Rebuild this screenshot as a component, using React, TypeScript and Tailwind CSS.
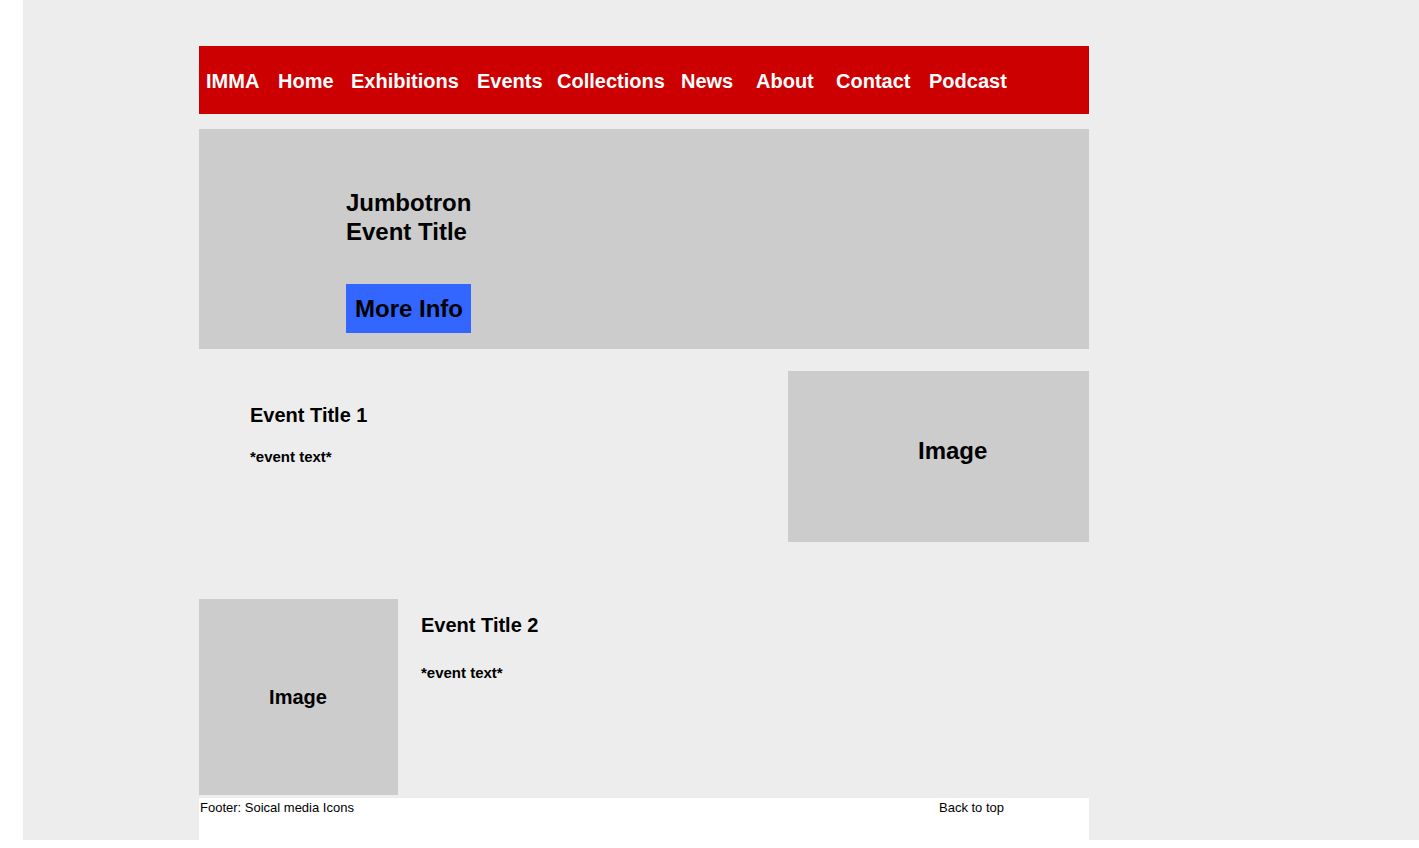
const NavItems = [
  { label: "IMMA", w: "w-[72px]" },
  { label: "Home", w: "w-[73px]" },
  { label: "Exhibitions", w: "w-[126px]" },
  { label: "Events", w: "w-[80px]" },
  { label: "Collections", w: "w-[124px]" },
  { label: "News", w: "w-[75px]" },
  { label: "About", w: "w-[80px]" },
  { label: "Contact", w: "w-[93px]" },
  { label: "Podcast", w: "w-auto" },
];

const App = () => {
  return (
    <div className="bg-white min-h-[848px] font-['Liberation_Sans',Arial,sans-serif]">
      <div className="ml-[23px] h-[840px] bg-[#ededed] pt-[46px] pl-[176px]">
        <div className="w-[890px]">
          {/* nav */}
          <nav className="h-[68px] bg-[#cc0000] flex items-center pl-[7px] pt-[2px]">
            {NavItems.map((item, index) => (
              <span
                key={index}
                className={`${item.w} shrink-0 text-white font-bold text-[20px] leading-[23px]`}
              >
                {item.label}
              </span>
            ))}
          </nav>

          {/* jumbotron */}
          <div className="mt-[15px] h-[220px] bg-[#cccccc] pt-[59px] pl-[147px]">
            <h1 className="font-bold text-[24px] leading-[29px] text-black">
              Jumbotron
              <br />
              Event Title
            </h1>
            <button className="mt-[38px] w-[125px] h-[49px] bg-[#3366ff] pl-[9px] text-left font-bold text-[24px] leading-[28px] text-black">
              More Info
            </button>
          </div>

          {/* event 1 */}
          <div className="mt-[22px] flex justify-between">
            <div className="pt-[33px] pl-[51px]">
              <h2 className="font-bold text-[20px] leading-[23px] text-black">Event Title 1</h2>
              <p className="mt-[21px] font-bold text-[15px] leading-[17px] text-black">*event text*</p>
            </div>
            <div className="w-[301px] h-[171px] bg-[#cccccc] pt-[66px] pl-[130px]">
              <p className="font-bold text-[24px] leading-[28px] text-black">Image</p>
            </div>
          </div>

          {/* event 2 */}
          <div className="mt-[57px] flex">
            <div className="w-[199px] h-[196px] bg-[#cccccc] flex items-center justify-center pr-[1px]">
              <p className="font-bold text-[20px] leading-[23px] text-black">Image</p>
            </div>
            <div className="pt-[15px] pl-[23px]">
              <h2 className="font-bold text-[20px] leading-[23px] text-black">Event Title 2</h2>
              <p className="mt-[27px] font-bold text-[15px] leading-[17px] text-black">*event text*</p>
            </div>
          </div>

          {/* footer */}
          <footer className="mt-[3px] h-[42px] bg-white flex pt-[2px] text-[13px] leading-[15px] text-black">
            <span className="w-[740px] pl-[1px]">Footer: Soical media Icons</span>
            <span>Back to top</span>
          </footer>
        </div>
      </div>
    </div>
  );
};

export default App;
